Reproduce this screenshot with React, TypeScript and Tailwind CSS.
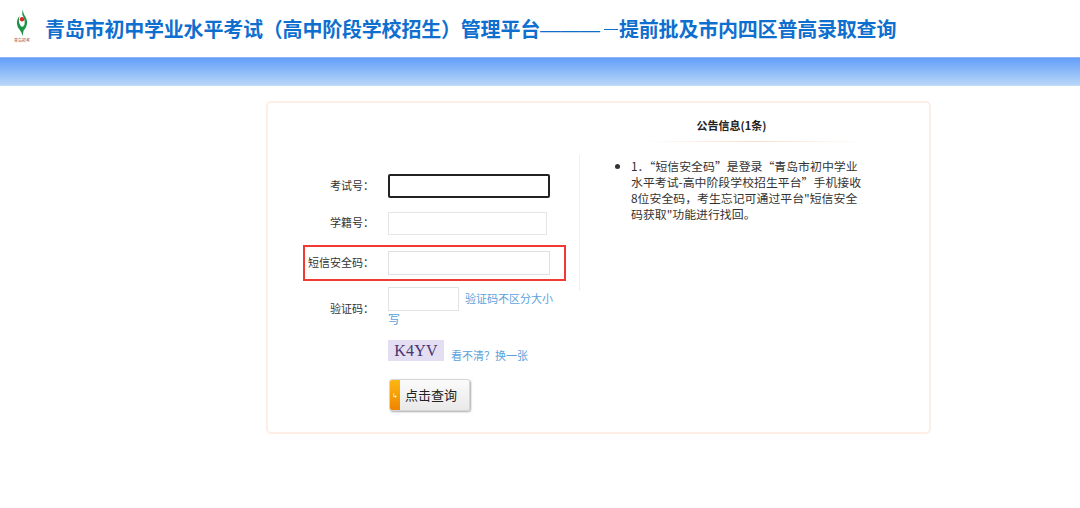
const font = "font-['Liberation_Sans','Noto_Sans_CJK_SC',sans-serif]";

const Logo = () => (
    <div className="mb-[5px] flex w-[18px] flex-col items-center">
        <svg width="12" height="27" viewBox="0 0 14 32">
            <path d="M8 0 C8.5 3 9 5 11 8 C14 13 14 19 9 24 L7.5 31 C7 27 6 26 4 23 C0 18 0 12 4 7 C3 11 3 15 5 18 C7 21 9 20 10 17 C11 13 9 9 7.5 6 C7 4 7.3 2 8 0 Z" fill="#1f9448" />
            <circle cx="7" cy="11" r="2.6" fill="#e0262c" />
        </svg>
        <span className="mt-[1px] text-[4px] leading-[5px] whitespace-nowrap text-[#a8483c]">青岛招考</span>
    </div>
);

const Label = ({ children }: { children: string }) => (
    <span className="w-[85px] shrink-0 pr-[14px] text-right text-[11px] whitespace-nowrap text-[#333]">{children}</span>
);

const App = () => {
    return (
        <div className={`h-[508px] overflow-hidden bg-white ${font}`}>
            {/* Header */}
            <div className="flex h-[57px] items-center pl-[13px]">
                <Logo />
                <h1 className="mt-[2px] ml-[14px] text-[20px] font-bold tracking-[-0.2px] whitespace-nowrap text-[#0f6fcf]">
                    青岛市初中学业水平考试（高中阶段学校招生）管理平台
                    <span className="font-normal tracking-[0px]">———</span>
                    <span className="mr-[1px] ml-[4px] inline-block h-px w-[14px] bg-[#0f6fcf] align-[7px]" />
                    提前批及市内四区普高录取查询
                </h1>
            </div>
            <div className="h-[29px] border-t border-b border-t-[#8fb3f5] border-b-[#c5dcf8] bg-gradient-to-b from-[#639ef8] to-[#b7d6f8]" />

            {/* Card */}
            <div className="mt-[15px] ml-[266px] flex h-[333px] w-[665px] rounded-[5px] border-2 border-[#fdeee6] text-[12px]">
                {/* Form */}
                <div className="w-[311px] shrink-0 pt-[71px] pl-[35px]">
                    <div className="flex h-[24px] items-center">
                        <Label>考试号：</Label>
                        <input className="h-[24px] w-[162px] rounded-[2px] border-2 border-[#222] outline-none" />
                    </div>
                    <div className="mt-[14px] flex h-[23px] items-center">
                        <Label>学籍号：</Label>
                        <input className="h-[23px] w-[159px] border border-[#e6e6e6] outline-none" />
                    </div>
                    <div className="mt-[10px] flex h-[36px] w-[263px] items-center border-2 border-[#f03a33]">
                        <span className="w-[83px] shrink-0 pl-[3px] text-[11px] whitespace-nowrap text-[#333]">短信安全码：</span>
                        <input className="h-[24px] w-[162px] border border-[#e0e0e4] outline-none" />
                    </div>
                    <div className="mt-[6px] flex items-center">
                        <span className="mt-[3px] w-[85px] shrink-0 pr-[14px] text-right text-[11px] whitespace-nowrap text-[#333]">验证码：</span>
                        <div className="w-[170px] text-[11px] text-[#5aa3dc]">
                            <div className="flex h-[24px] items-start">
                                <input className="h-[24px] w-[71px] shrink-0 border border-[#e2e2e2] outline-none" />
                                <span className="ml-[6px] leading-[24px] whitespace-nowrap">验证码不区分大小</span>
                            </div>
                            <div className="mt-[1px] text-[12px] leading-[16px]">写</div>
                        </div>
                    </div>
                    <div className="mt-[12px] ml-[85px] flex h-[21px] items-start">
                        <div className="h-[21px] w-[56px] bg-[#e3def1] text-center font-['Liberation_Serif',serif] text-[16px] leading-[22px] tracking-[0.2px] text-[#4a3470]">K4YV</div>
                        <span className="mt-[8px] ml-[7px] text-[11px] leading-[16px] text-[#5aa3dc]">看不清？换一张</span>
                    </div>
                    <button className="mt-[18px] ml-[86px] flex h-[32px] w-[81px] items-center overflow-hidden rounded-[3px] border border-[#d6d6d6] bg-gradient-to-b from-[#fbfbfb] to-[#e9e9e9] pt-[1px] shadow-[1px_1px_2px_#aaa]">
                        <span className="-mt-[1px] flex h-[calc(100%+1px)] w-[10px] items-center justify-center bg-gradient-to-b from-[#fdb813] to-[#ee8400] text-[7px] leading-none text-[#fff3d0]">↳</span>
                        <span className="ml-[5px] text-[13px] whitespace-nowrap text-[#222]">点击查询</span>
                    </button>
                </div>

                {/* Notice */}
                <div className="mt-[52px] h-[136px] w-px shrink-0 bg-[#f6eeea]" />
                <div className="flex-1 pt-[14px] font-['Noto_Sans_CJK_SC',sans-serif]">
                    <h2 className="pr-[46px] text-center text-[11px] leading-[16px] font-bold text-[#222]">公告信息(1条)</h2>
                    <div className="mx-[62px] mt-[8px] h-px bg-gradient-to-r from-white via-[#fadfce] to-white" />
                    <ul className="mt-[16px] ml-[51px] w-[234px] list-disc pl-0 text-[11.9px] leading-[16px] text-[#333]">
                        <li className="break-all">1．“短信安全码”是登录“青岛市初中学业水平考试-高中阶段学校招生平台”手机接收8位安全码，考生忘记可通过平台"短信安全码获取"功能进行找回。</li>
                    </ul>
                </div>
            </div>
        </div>
    );
};

export default App;
